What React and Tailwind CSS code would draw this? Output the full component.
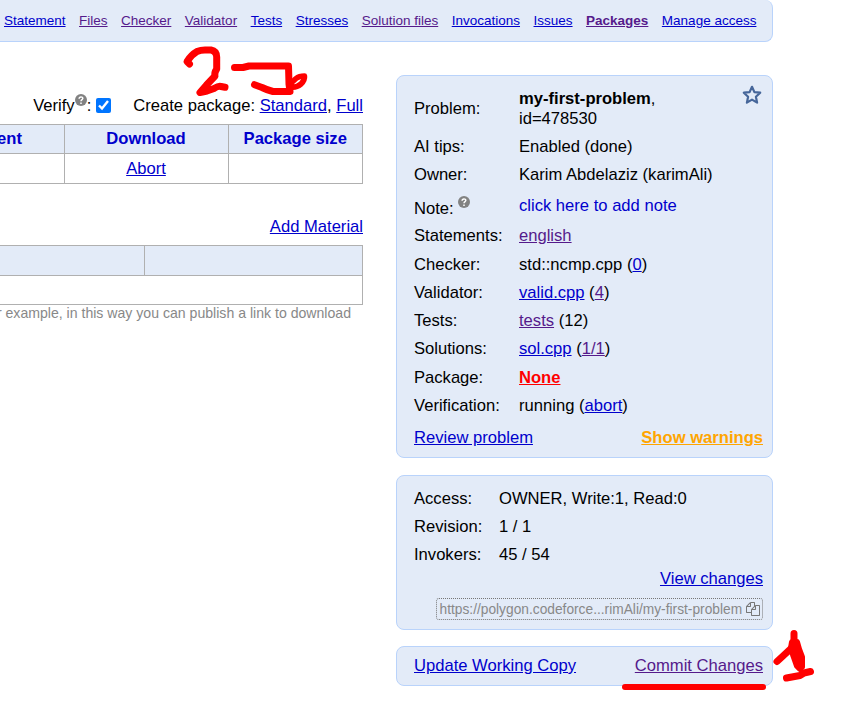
const BLUE = 'text-[#0000cc] underline';
const VISITED = 'text-[#551a8b] underline';

const NAV = [
  ['Statement', BLUE],
  ['Files', VISITED],
  ['Checker', VISITED],
  ['Validator', VISITED],
  ['Tests', BLUE],
  ['Stresses', BLUE],
  ['Solution files', VISITED],
  ['Invocations', BLUE],
  ['Issues', BLUE],
  ['Packages', 'text-[#551a8b] underline font-bold'],
  ['Manage access', BLUE],
];

function Link({ visited, children }) {
  return <a className={visited ? VISITED : BLUE}>{children}</a>;
}

function Help({ className }) {
  return (
    <svg viewBox="0 0 12 12" className={`inline-block size-3 shrink-0 ${className}`}>
      <circle cx="6" cy="6" r="6" fill="#828282" />
      <path d="M4.1 4.7C4.2 2.2 7.9 2.4 7.8 4.5C7.7 5.7 6.1 5.7 6 7.2M6 8.4V9.9" fill="none" stroke="#fff" strokeWidth="1.5" />
    </svg>
  );
}

function Panel({ className, children }) {
  return (
    <section className={`rounded-lg border border-[#b9d3fb] bg-[#e3ebf8] pr-[9px] pl-[17px] ${className}`}>
      {children}
    </section>
  );
}

function Row({ label, h = 'h-[28.2px]', w = 'w-[105px]', children }) {
  return (
    <div className={`flex items-center ${h}`}>
      <div className={`shrink-0 ${w}`}>{label}</div>
      <div className="whitespace-nowrap">{children}</div>
    </div>
  );
}

function CopyIcon() {
  return (
    <svg viewBox="0 0 1792 1792" className="size-[14px] shrink-0" fill="#777">
      <path d="M1696 384q40 0 68 28t28 68v1216q0 40-28 68t-68 28h-960q-40 0-68-28t-28-68v-288h-544q-40 0-68-28t-28-68v-672q0-40 20-88t48-76l408-408q28-28 76-48t88-20h416q40 0 68 28t28 68v328q68-40 128-40h416zm-544 213l-299 299h299v-299zm-640-384l-299 299h299v-299zm196 647l316-316v-416h-384v416q0 40-28 68t-68 28h-416v640h512v-256q0-40 20-88t48-76zm956 804v-1152h-384v416q0 40-28 68t-68 28h-416v640h896z" />
    </svg>
  );
}

function Scribbles() {
  return (
    <svg viewBox="0 0 842 724" className="pointer-events-none absolute inset-0 h-[724px] w-[842px]" fill="none" stroke="#ff0000" strokeWidth="7" strokeLinecap="round" strokeLinejoin="round">
      <path d="M189.5 64L187 61.5Q191 55 197 51.5Q201 49.8 206 50H211Q216.500 51 216.700 57V69Q214 73 215 76L206.500 85L200 92.500L207 91L214 88.500Q219 85.500 221 86.500L225 87.300" />
      <path d="M234.500 67.500H243L249 66H288.500L289 84L290 91.500H273Q267 90 262 87.500L254.500 84.700" />
      <path d="M289 85L296 78.500Q299 76 304.500 76Q305 80 301 84Q296 88 291 87" strokeWidth="5.500" />
      <path d="M625 687H763" strokeWidth="6" />
      <path d="M777 661.500L783 656L791 648.500L794 645V633.500" />
      <path d="M792 642H797L799 649L802 657V667L800 669L797 666L793.500 656L791 648Z" fill="#ff0000" strokeWidth="6" />
      <path d="M786.500 678L800 675.500L804 673L810.500 671.500" />
    </svg>
  );
}

export default function App() {
  return (
    <div className="relative h-[724px] w-[842px] overflow-hidden bg-white font-['Liberation_Sans',Arial,sans-serif] text-[16.6px] leading-5 text-black">
      <nav className="flex h-[42px] w-[773px] items-center gap-[13.5px] rounded-r-lg border-r border-b border-[#b9d3fb] bg-[#e3ebf8] pl-1 text-[13.5px] whitespace-nowrap">
        {NAV.map(([name, style]) => <a key={name} className={style}>{name}</a>)}
      </nav>

      <div className="flex">
        <main className="w-[363px] shrink-0">
          <div className="mt-[54px] flex h-[20px] items-center justify-end whitespace-nowrap">
            <span>Verify</span>
            <Help className="mb-[13px]" />
            <span>:</span>
            <input type="checkbox" defaultChecked className="mr-[22.5px] mb-[2px] ml-[4.5px] size-[15px]" />
            <span>Create package: <Link>Standard</Link>, <Link>Full</Link></span>
          </div>
          <table className="mt-[8px] w-[363px] table-fixed border-collapse text-center">
            <thead>
              <tr className="h-[29px] bg-[#e3ebf8] text-[#0000cc]">
                <th className="w-[64px] border-y border-[#b0b0b0] p-0"><div className="flex justify-end pr-[41.5px]">Comment</div></th>
                <th className="w-[164px] border border-[#b0b0b0] p-0">Download</th>
                <th className="border border-[#b0b0b0] p-0">Package size</th>
              </tr>
            </thead>
            <tbody>
              <tr className="h-[30px]">
                <td className="border-y border-[#b0b0b0] p-0" />
                <td className="border border-[#b0b0b0] p-0"><Link>Abort</Link></td>
                <td className="border border-[#b0b0b0] p-0" />
              </tr>
            </tbody>
          </table>
          <div className="mt-[33px] text-right"><Link>Add Material</Link></div>
          <div className="mt-[8px] border-y border-r border-[#b0b0b0]">
            <div className="flex h-[30px] border-b border-[#b0b0b0] bg-[#e3ebf8]">
              <div className="w-[145px] border-r border-[#b0b0b0]" />
            </div>
            <div className="h-[28px]" />
          </div>
          <div className="flex justify-end pr-3 text-[14.1px] leading-[17px] whitespace-nowrap text-[#888]">
            For example, in this way you can publish a link to download
          </div>
        </main>

        <aside className="ml-[33px] flex w-[377px] flex-col pt-[33px]">
          <Panel className="h-[383px]">
            <div className="flex h-[57px] items-center pt-[8px]">
              <div className="w-[105px]">Problem:</div>
              <div className="flex-1"><b>my-first-problem</b>,<br />id=478530</div>
              <svg viewBox="0 0 20 20" className="mt-[-28px] mr-px size-5" fill="none" stroke="#46669a" strokeWidth="2.2" strokeLinejoin="round">
                <path d="M10 1.8L12.4 7.1L18.2 7.7L13.9 11.7L15.1 17.6L10 14.6L4.9 17.6L6.1 11.7L1.8 7.7L7.6 7.1Z" />
              </svg>
            </div>
            <Row label="AI tips:">Enabled (done)</Row>
            <Row label="Owner:">Karim Abdelaziz (karimAli)</Row>
            <Row h="h-[33px]" label={<span className="flex items-center gap-1 pt-[6px]">Note: <Help className="mb-[14px]" /></span>}>
              <span className="text-[#0000cc]">click here to add note</span>
            </Row>
            <Row label="Statements:"><Link visited>english</Link></Row>
            <Row label="Checker:">std::ncmp.cpp (<Link>0</Link>)</Row>
            <Row label="Validator:"><Link>valid.cpp</Link> (<Link visited>4</Link>)</Row>
            <Row label="Tests:"><Link visited>tests</Link> (12)</Row>
            <Row label="Solutions:"><Link>sol.cpp</Link> (<Link visited>1/1</Link>)</Row>
            <Row h="h-[29px]" label="Package:"><b className="text-[#ff0000] underline">None</b></Row>
            <Row h="h-[27.4px]" label="Verification:">running (<Link>abort</Link>)</Row>
            <div className="mt-[8px] flex justify-between">
              <Link>Review problem</Link>
              <b className="text-[#ffa500] underline">Show warnings</b>
            </div>
          </Panel>

          <Panel className="mt-[17px] h-[155px] pt-[9px]">
            <Row w="w-[85px]" label="Access:">OWNER, Write:1, Read:0</Row>
            <Row w="w-[85px]" label="Revision:">1 / 1</Row>
            <Row w="w-[85px]" h="h-[27.6px]" label="Invokers:">45 / 54</Row>
            <div className="text-right"><Link>View changes</Link></div>
            <div className="mt-[9px] ml-auto flex h-[22px] w-[327px] items-center justify-between rounded-[3px] border border-dotted border-[#777] pr-[2px] pl-[2.5px] text-[13.75px] whitespace-nowrap text-[#888]">
              <span className="pt-[2px]">https://polygon.codeforce...rimAli/my-first-problem</span>
              <CopyIcon />
            </div>
          </Panel>

          <Panel className="mt-[16px] flex h-[40px] items-center justify-between">
            <Link>Update Working Copy</Link>
            <Link visited>Commit Changes</Link>
          </Panel>
        </aside>
      </div>
      <Scribbles />
    </div>
  );
}
